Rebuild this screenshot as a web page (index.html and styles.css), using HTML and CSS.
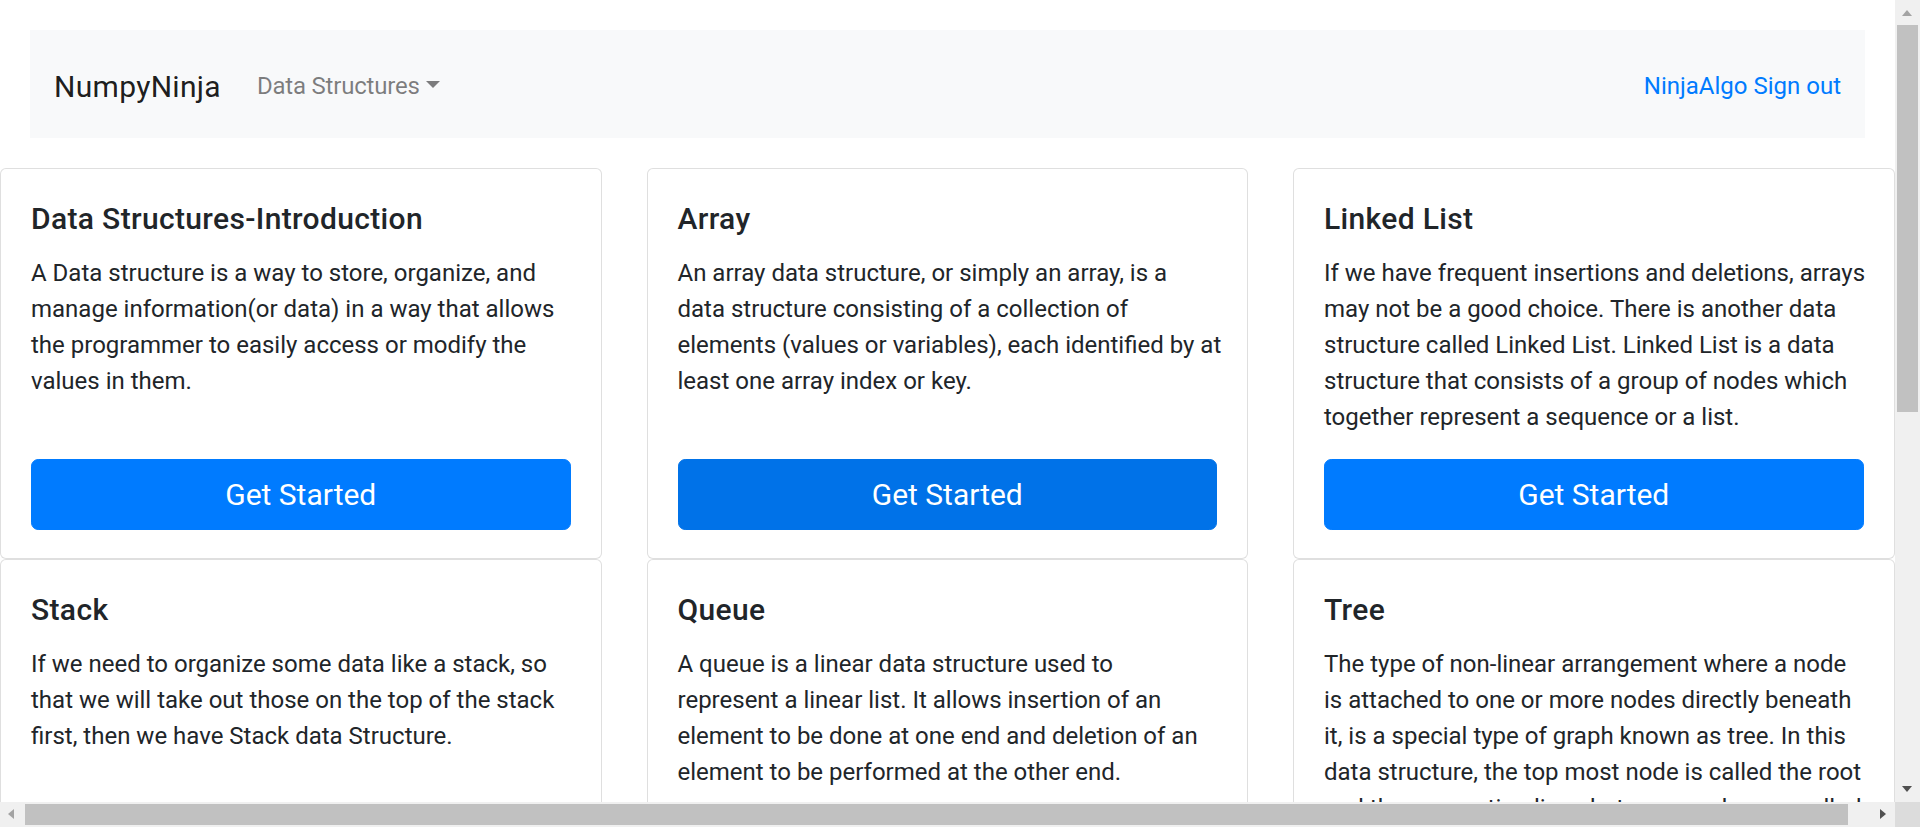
FILE: index.html
```html
<!DOCTYPE html>
<html lang="en">
<head>
<meta charset="utf-8">
<title>NumpyNinja</title>
<link rel="stylesheet" href="styles.css">
</head>
<body>
<div class="page">
  <nav class="navbar">
    <a class="brand" href="#">NumpyNinja</a>
    <a class="nav-link" href="#">Data Structures<span class="caret"></span></a>
    <div class="nav-right">
      <a href="#">NinjaAlgo</a> <a href="#">Sign out</a>
    </div>
  </nav>

  <div class="cards">
    <div class="card">
      <div class="card-body">
        <h5 class="card-title">Data Structures-Introduction</h5>
        <p class="card-text">A Data structure is a way to store, organize, and<br>manage information(or data) in a way that allows<br>the programmer to easily access or modify the<br>values in them.</p>
        <a class="btn" href="#">Get Started</a>
      </div>
    </div>
    <div class="card">
      <div class="card-body">
        <h5 class="card-title">Array</h5>
        <p class="card-text">An array data structure, or simply an array, is a<br>data structure consisting of a collection of<br>elements (values or variables), each identified by at<br>least one array index or key.</p>
        <a class="btn btn-hover" href="#">Get Started</a>
      </div>
    </div>
    <div class="card">
      <div class="card-body">
        <h5 class="card-title">Linked List</h5>
        <p class="card-text">If we have frequent insertions and deletions, arrays<br>may not be a good choice. There is another data<br>structure called Linked List. Linked List is a data<br>structure that consists of a group of nodes which<br>together represent a sequence or a list.</p>
        <a class="btn" href="#">Get Started</a>
      </div>
    </div>
    <div class="card">
      <div class="card-body">
        <h5 class="card-title">Stack</h5>
        <p class="card-text">If we need to organize some data like a stack, so<br>that we will take out those on the top of the stack<br>first, then we have Stack data Structure.</p>
        <a class="btn" href="#">Get Started</a>
      </div>
    </div>
    <div class="card">
      <div class="card-body">
        <h5 class="card-title">Queue</h5>
        <p class="card-text">A queue is a linear data structure used to<br>represent a linear list. It allows insertion of an<br>element to be done at one end and deletion of an<br>element to be performed at the other end.</p>
        <a class="btn" href="#">Get Started</a>
      </div>
    </div>
    <div class="card">
      <div class="card-body">
        <h5 class="card-title">Tree</h5>
        <p class="card-text">The type of non-linear arrangement where a node<br>is attached to one or more nodes directly beneath<br>it, is a special type of graph known as tree. In this<br>data structure, the top most node is called the root<br>and the connecting lines between nodes are called<br>edges.</p>
        <a class="btn" href="#">Get Started</a>
      </div>
    </div>
  </div>
</div>

<div class="vscroll">
  <span class="arrow arrow-up"></span>
  <span class="vthumb"></span>
  <span class="arrow arrow-down"></span>
</div>
<div class="hscroll">
  <span class="arrow arrow-left"></span>
  <span class="hthumb"></span>
  <span class="arrow arrow-right"></span>
</div>
<div class="scroll-corner"></div>
</body>
</html>
```

FILE: styles.css
```css
* {
  box-sizing: border-box;
}

html,
body {
  margin: 0;
  height: 100%;
  overflow: hidden;
}

body {
  font-family: Roboto, "Liberation Sans", Arial, sans-serif;
  font-size: 24px;
  line-height: 1.5;
  color: #212529;
  background: #fff;
}

a {
  text-decoration: none;
}

.page {
  width: 1895px;
}

/* Navbar */
.navbar {
  display: flex;
  align-items: center;
  height: 108px;
  margin: 30px;
  padding: 4px 24px 0;
  background: #f8f9fa;
}

.brand {
  font-size: 30px;
  line-height: 45px;
  letter-spacing: 0.3px;
  color: rgba(0, 0, 0, 0.9);
  margin-right: 24px;
}

.nav-link {
  padding: 0 12px;
  letter-spacing: -0.2px;
  color: rgba(0, 0, 0, 0.5);
}

.caret {
  display: inline-block;
  margin-left: 6px;
  vertical-align: 6px;
  width: 0;
  height: 0;
  border-top: 7.2px solid rgba(0, 0, 0, 0.5);
  border-left: 7.2px solid transparent;
  border-right: 7.2px solid transparent;
}

.nav-right {
  margin-left: auto;
}

.nav-right a {
  color: #007bff;
}

/* Cards */
.cards {
  display: grid;
  grid-template-columns: repeat(3, 601.5px);
  column-gap: 45px;
}

.card {
  display: flex;
  flex-direction: column;
  background: #fff;
  border: 1px solid rgba(0, 0, 0, 0.125);
  border-radius: 6px;
}

.card-body {
  flex: 1;
  display: flex;
  flex-direction: column;
  padding: 32px 30px 28px;
}

.card-title {
  margin: 0 0 18px;
  font-size: 30px;
  font-weight: 500;
  line-height: 1.2;
  letter-spacing: 0.35px;
}

.card-text {
  margin: 0 0 24px;
  white-space: nowrap;
}

.btn {
  display: block;
  margin-top: auto;
  width: 100%;
  padding: 12px 24px;
  font-size: 30px;
  line-height: 45px;
  text-align: center;
  color: #fff;
  background: #007bff;
  border: 1px solid #007bff;
  border-radius: 7.2px;
}

.btn-hover {
  background: #0072e8;
  border-color: #0072e8;
}

/* Window scrollbars */
.vscroll {
  position: fixed;
  top: 0;
  right: 0;
  width: 25px;
  height: 802px;
  background: #f0f0f0;
}

.vthumb {
  position: absolute;
  top: 25px;
  left: 2px;
  width: 21px;
  height: 387px;
  background: #c1c1c1;
}

.hscroll {
  position: fixed;
  left: 0;
  bottom: 0;
  width: 1895px;
  height: 25px;
  background: #f0f0f0;
}

.hthumb {
  position: absolute;
  top: 2px;
  left: 25px;
  width: 1823px;
  height: 21px;
  background: #c1c1c1;
}

.scroll-corner {
  position: fixed;
  right: 0;
  bottom: 0;
  width: 25px;
  height: 25px;
  background: #dcdcdc;
}

.arrow {
  position: absolute;
  width: 0;
  height: 0;
}

.arrow-up {
  top: 10px;
  left: 7px;
  border-left: 5.5px solid transparent;
  border-right: 5.5px solid transparent;
  border-bottom: 6px solid #a3a3a3;
}

.arrow-down {
  top: 786px;
  left: 7px;
  border-left: 5.5px solid transparent;
  border-right: 5.5px solid transparent;
  border-top: 6px solid #505050;
}

.arrow-left {
  top: 7px;
  left: 8px;
  border-top: 5.5px solid transparent;
  border-bottom: 5.5px solid transparent;
  border-right: 6px solid #a3a3a3;
}

.arrow-right {
  top: 7px;
  left: 1880px;
  border-top: 5.5px solid transparent;
  border-bottom: 5.5px solid transparent;
  border-left: 6px solid #505050;
}
```
